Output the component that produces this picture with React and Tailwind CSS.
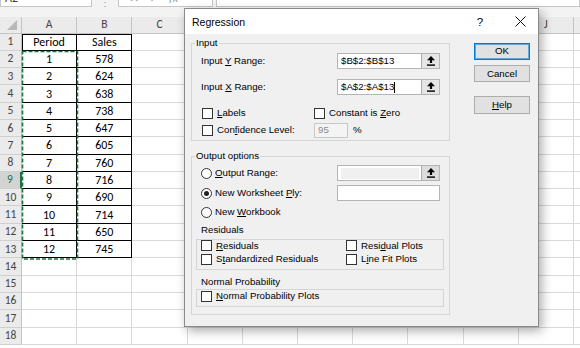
import React from 'react';

const DATA = [
  ['Period', 'Sales'],
  ['1', '578'], ['2', '624'], ['3', '638'], ['4', '738'], ['5', '647'], ['6', '605'],
  ['7', '760'], ['8', '716'], ['9', '690'], ['10', '714'], ['11', '650'], ['12', '745'],
];
const COLS = ['A', 'B', 'C', 'D', 'E', 'F', 'G', 'H', 'I', 'J', 'K'];
const ROWS = Array.from({ length: 18 }, (_, i) => i + 1);

function UpArrow() {
  return (
    <svg width="8" height="10" viewBox="0 0 8 10">
      <path d="M4 0 L8 4.2 L5.1 4.2 L5.1 7 L2.9 7 L2.9 4.2 L0 4.2 Z" fill="#000" />
      <rect x="0" y="8.4" width="8" height="1.4" fill="#000" />
    </svg>
  );
}

function RangeInput({ value, caret, disabled }) {
  return (
    <div className="w-[103px] h-full flex border border-[#b4b4b4] bg-white">
      <div className="flex-1 flex items-center pl-[3px]">
        {disabled ? (
          <div className="w-full h-[11px] mr-[2px] bg-[#f0f0f0]" />
        ) : (
          <>
            <span>{value}</span>
            {caret && <span className="w-[1px] h-[11px] bg-black" />}
          </>
        )}
      </div>
      <div className={`w-[18px] h-full flex items-center justify-center border-l border-[#adadad] ${disabled ? 'bg-[#dcdcdc]' : 'bg-[#e5e5e5]'}`}>
        <UpArrow />
      </div>
    </div>
  );
}

function Check() {
  return <span className="w-[11px] h-[11px] shrink-0 border border-[#333] bg-white" />;
}

function Radio({ checked }) {
  return (
    <span className="w-[11px] h-[11px] shrink-0 rounded-full border border-[#333] bg-white flex items-center justify-center">
      {checked && <span className="w-[5px] h-[5px] rounded-full bg-[#222]" />}
    </span>
  );
}

function U({ children }) {
  return <span className="underline underline-offset-[1px]">{children}</span>;
}

function Button({ children, primary, className }) {
  return (
    <div
      className={`w-[56px] h-[17.5px] flex items-center justify-center bg-[#e1e1e1] border ${primary ? 'border-[#0078d7] shadow-[inset_0_0_0_1px_rgba(0,120,215,0.55)]' : 'border-[#adadad]'} ${className}`}
    >
      {children}
    </div>
  );
}

function Dialog() {
  return (
    <div className="absolute left-[184px] top-[8px] w-[355px] h-[319px] border border-[#8a8a8a] bg-[#f0f0f0] shadow-[3px_4px_10px_rgba(0,0,0,0.32)] flex flex-col [font-family:'Liberation_Sans',Arial,sans-serif] text-[9.7px] leading-[12px] text-black">
      <div className="h-[25px] shrink-0 bg-white flex items-center">
        <span className="pl-[7px] text-[10.5px]">Regression</span>
        <span className="ml-auto mr-[18px] w-[20px] text-center text-[11.5px]">?</span>
        <span className="mr-[6px] w-[24px] flex items-center justify-center">
          <svg width="11" height="11" viewBox="0 0 11 11">
            <path d="M0.5 0.5 L10.5 10.5 M10.5 0.5 L0.5 10.5" stroke="#111" strokeWidth="1" />
          </svg>
        </span>
      </div>
      <div className="flex pl-[6px] pt-[3px]">
        <div className="w-[259px] flex flex-col">
          <fieldset className="w-[259px] border border-[#d5d5d5] pb-[2px]">
            <legend className="ml-[3px] px-[1px] leading-[12px]">Input</legend>
            <div className="mt-[4px] h-[16px] flex items-center">
              <div className="w-[145px] pl-[9px]">Input <U>Y</U> Range:</div>
              <RangeInput value="$B$2:$B$13" />
            </div>
            <div className="mt-[10px] h-[16px] flex items-center">
              <div className="w-[145px] pl-[9px]">Input <U>X</U> Range:</div>
              <RangeInput value="$A$2:$A$13" caret />
            </div>
            <div className="mt-[12px] h-[12px] flex items-center">
              <div className="w-[122px] pl-[10px] flex items-center gap-[4px]">
                <Check />
                <span><U>L</U>abels</span>
              </div>
              <div className="flex items-center gap-[4px]">
                <Check />
                <span>Constant is <U>Z</U>ero</span>
              </div>
            </div>
            <div className="mt-[3.7px] h-[15px] flex items-center">
              <div className="w-[122px] pl-[10px] flex items-center gap-[4px]">
                <Check />
                <span>Con<U>f</U>idence Level:</span>
              </div>
              <div className="w-[34px] h-[15px] border border-[#c8c8c8] bg-[#f4f4f4] text-[#8a8a8a] flex items-center pl-[3px]">95</div>
              <span className="ml-[5px]">%</span>
            </div>
          </fieldset>

          <fieldset className="mt-[9.7px] w-[259px] border border-[#d5d5d5] pb-[6.5px]">
            <legend className="ml-[3px] px-[1px] leading-[12px]">Output options</legend>
            <div className="mt-[3px] h-[16px] flex items-center">
              <div className="w-[145px] pl-[9px] flex items-center gap-[3px]">
                <Radio />
                <span><U>O</U>utput Range:</span>
              </div>
              <RangeInput disabled />
            </div>
            <div className="mt-[3.3px] h-[16.7px] flex items-center">
              <div className="w-[145px] pl-[9px] flex items-center gap-[3px]">
                <Radio checked />
                <span>New Worksheet <U>P</U>ly:</span>
              </div>
              <div className="w-[103px] h-full border border-[#b4b4b4] bg-white" />
            </div>
            <div className="mt-[5px] h-[12px] pl-[9px] flex items-center gap-[3px]">
              <Radio />
              <span>New <U>W</U>orkbook</span>
            </div>
            <div className="mt-[5.3px] h-[12px] pl-[9px]">Residuals</div>
            <div className="mt-[3px] ml-[4px] w-[248px] border border-[#d5d5d5] pb-[4px]">
              <div className="h-[12px] flex items-center">
                <div className="w-[149px] pl-[4px] flex items-center gap-[4px]">
                  <Check />
                  <span><U>R</U>esiduals</span>
                </div>
                <div className="flex items-center gap-[4px]">
                  <Check />
                  <span>Resi<U>d</U>ual Plots</span>
                </div>
              </div>
              <div className="mt-[1.5px] h-[12px] flex items-center">
                <div className="w-[149px] pl-[4px] flex items-center gap-[4px]">
                  <Check />
                  <span>S<U>t</U>andardized Residuals</span>
                </div>
                <div className="flex items-center gap-[4px]">
                  <Check />
                  <span>L<U>i</U>ne Fit Plots</span>
                </div>
              </div>
            </div>
            <div className="mt-[6px] h-[12px] pl-[9px]">Normal Probability</div>
            <div className="mt-[1px] ml-[4px] w-[248px] border border-[#d5d5d5] pb-[4px]">
              <div className="h-[12px] pl-[4px] flex items-center gap-[4px]">
                <Check />
                <span><U>N</U>ormal Probability Plots</span>
              </div>
            </div>
          </fieldset>
        </div>

        <div className="ml-[24px] flex flex-col">
          <Button primary className="mt-[5.7px]">OK</Button>
          <Button className="mt-[4.7px]">Cancel</Button>
          <Button className="mt-[13.7px]"><span><U>H</U>elp</span></Button>
        </div>
      </div>
    </div>
  );
}

function Sheet() {
  return (
    <div className="w-[580px] h-[348px] overflow-hidden bg-white [font-family:Carlito,Calibri,Lato,'Liberation_Sans',sans-serif] text-black">
      {/* formula bar strip */}
      <div className="h-[16.5px] bg-[#f3f3f3] flex items-start text-[#444] text-[12px]">
        <div className="w-[92px] h-[18px] -mt-[11px] bg-white border border-[#c6c6c6] pl-[4px] flex items-center">A2</div>
        <div className="w-[26px] h-[7px] flex items-start justify-center text-[#9a9a9a] text-[10px] leading-[6px]">⋮</div>
        <div className="w-[95px] h-[18px] -mt-[11px] bg-white border border-[#c6c6c6] flex items-center gap-[10px] pl-[10px] text-[#9a9a9a]">
          <span>✕</span><span>✓</span><span className="italic">fx</span>
        </div>
        <div className="ml-[3px] flex-1 h-[18px] -mt-[11px] bg-white border border-[#c6c6c6]" />
      </div>

      {/* column headers */}
      <div className="h-[17px] flex bg-[#ebebeb] text-[#444] text-[11.5px]">
        <div className="w-[22px] shrink-0 h-full border-r border-b border-[#c4c4c4] flex items-end justify-end pr-[4px] pb-[3px]">
          <svg width="10" height="10" viewBox="0 0 10 10">
            <path d="M10 0 L10 10 L0 10 Z" fill="#b9b9b9" />
          </svg>
        </div>
        {COLS.map((c) => (
          <div key={c} className="w-[55.2px] shrink-0 h-full border-r border-b border-[#c4c4c4] flex items-center justify-center">
            {c}
          </div>
        ))}
      </div>

      {/* rows */}
      <div className="relative">
        {ROWS.map((r) => {
          const d = DATA[r - 1];
          const selected = r === 9;
          return (
            <div key={r} className="h-[17.3px] flex text-[12px]">
              <div
                className={`w-[22px] shrink-0 h-full border-b border-[#d0d0d0] flex items-center justify-center text-[11.5px] ${selected ? 'bg-[#d3d3d3] text-[#217346] border-r-2 border-r-[#217346]' : 'bg-[#ebebeb] text-[#444] border-r border-r-[#c4c4c4]'}`}
              >
                {r}
              </div>
              {COLS.map((c, ci) => {
                const inTable = d && ci < 2;
                let extra = '';
                if (r === 1 && ci === 0) extra = 'shadow-[inset_1px_1px_0_#000]';
                else if (r === 1 && ci === 1) extra = 'shadow-[inset_0_1px_0_#000]';
                return (
                  <div
                    key={c}
                    className={`w-[55.2px] shrink-0 h-full border-r border-b flex items-center justify-center ${inTable ? 'border-[#000]' : 'border-[#dadada]'} ${extra}`}
                  >
                    {inTable ? d[ci] : null}
                  </div>
                );
              })}
            </div>
          );
        })}
        <svg className="absolute left-[21px] top-[16px]" width="58" height="211" viewBox="0 0 58 211">
          <rect x="1.5" y="1.5" width="55" height="207.5" fill="none" stroke="#1f7244" strokeWidth="1.6" strokeDasharray="4 2" />
        </svg>
      </div>
    </div>
  );
}

export default function App() {
  return (
    <div className="relative w-[580px] h-[348px] overflow-hidden">
      <Sheet />
      <Dialog />
    </div>
  );
}
